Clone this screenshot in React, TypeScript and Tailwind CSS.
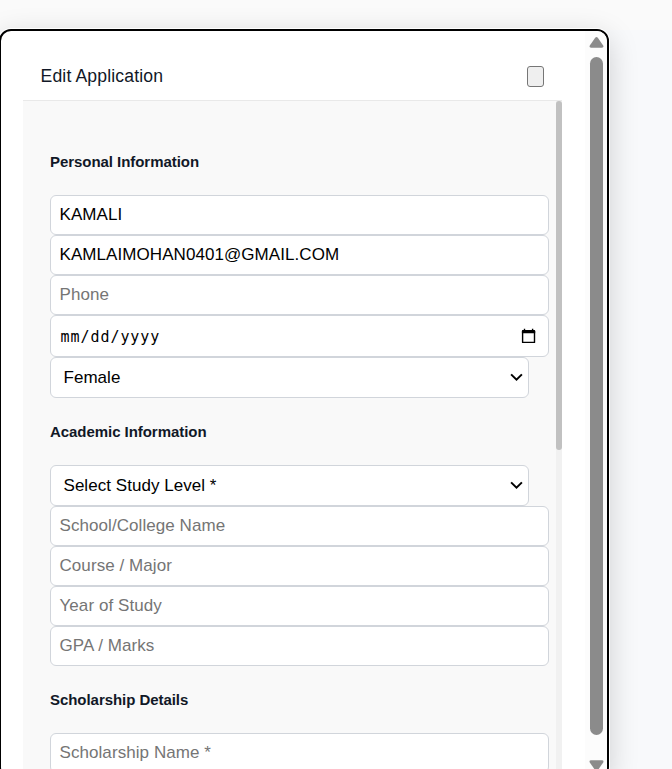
import type { ReactNode } from 'react';

function Field({ value, placeholder }: { value?: string; placeholder?: string }) {
  return (
    <div className="flex h-10 w-[499px] items-center rounded-[6px] border border-[#d1d5db] bg-white pl-[8.5px] text-[17px] tracking-[0.07px] text-black">
      {value ? <span>{value}</span> : <span className="text-[#757575]">{placeholder}</span>}
    </div>
  );
}

function Select({ children }: { children: ReactNode }) {
  return (
    <div className="flex h-[41px] w-[479px] items-center justify-between rounded-[6px] border border-[#d1d5db] bg-white pr-[5px] pl-[12.5px] text-[17px] tracking-[0.04px] text-black">
      <span>{children}</span>
      <svg width="13" height="9" viewBox="0 0 13 9" fill="none" stroke="#000" strokeWidth="2">
        <path d="M1.1 1.4 L6.5 6.6 L11.9 1.4" />
      </svg>
    </div>
  );
}

function DateField() {
  return (
    <div className="flex h-[42px] w-[499px] items-center justify-between rounded-[6px] border border-[#d1d5db] bg-white pr-[12px] pl-[9.5px] text-black">
      <span className="pt-[2px] font-['DejaVu_Sans_Mono',monospace] text-[15px] tracking-[0.95px]">mm/dd/yyyy</span>
      <svg width="15" height="16" viewBox="0 0 15 16" fill="none">
        <path d="M1.6 3.2h11.9v11.2h-11.9z" stroke="#000" strokeWidth="1.4" strokeLinejoin="round" />
        <path d="M1.8 2h11.5q.9 0 .9 .9V5.2H.9V2.9q0-.9 .9-.9zM2.8 .7h1.4V3H2.8zM10.9 .7h1.4V3h-1.4z" fill="#000" />
      </svg>
    </div>
  );
}

function Section({ title, children }: { title: string; children: ReactNode }) {
  return (
    <section className="flex flex-col">
      <h3 className="flex h-[67px] items-center pt-[2px] text-[15px] font-bold tracking-[-0.05px] text-[#111827]">{title}</h3>
      {children}
    </section>
  );
}

export default function App() {
  return (
    <div className="h-[769px] w-[672px] overflow-hidden bg-[linear-gradient(#fafafa_30px,#f8f9fb_30px)] pt-[29px] font-['Liberation_Sans',Arial,sans-serif]">
      <div className="-ml-px flex h-[750px] w-[610px] overflow-hidden rounded-[12px] border-2 border-black bg-white shadow-[0_0_0_1px_#ffffff,0_8px_30px_rgba(0,0,0,0.18)]">
        <div className="flex w-[584px] shrink-0 flex-col pl-[22px]">
          <header className="flex h-[70px] w-[539px] shrink-0 items-center justify-between border-b border-[#e9e9e9] pt-[21px] pr-[18px] pl-[17.5px]">
            <h2 className="text-[17.6px] tracking-[0.15px] text-[#111827]">Edit Application</h2>
            <button className="h-[21px] w-[17px] rounded-[3px] border border-[#767676] bg-[#efefef]" aria-label="Close" />
          </header>
          <div className="flex h-[680px] w-[539px] shrink-0 justify-between bg-[#f9f9f9]">
            <div className="flex flex-col pt-[27px] pl-[27px]">
              <Section title="Personal Information">
                <Field value="KAMALI" />
                <Field value="KAMLAIMOHAN0401@GMAIL.COM" />
                <Field placeholder="Phone" />
                <DateField />
                <Select>Female</Select>
              </Section>
              <Section title="Academic Information">
                <Select>Select Study Level *</Select>
                <Field placeholder="School/College Name" />
                <Field placeholder="Course / Major" />
                <Field placeholder="Year of Study" />
                <Field placeholder="GPA / Marks" />
              </Section>
              <Section title="Scholarship Details">
                <Field placeholder="Scholarship Name *" />
              </Section>
            </div>
            <div className="w-[6px] bg-[#f1f1f1]">
              <div className="h-[349px] rounded-[3px] bg-[#c1c1c1]" />
            </div>
          </div>
        </div>
        <div className="flex w-[22px] shrink-0 flex-col items-center bg-[#fcfcfc] pt-[6px]">
          <svg width="15" height="11" viewBox="0 0 15 11" className="shrink-0" fill="#8b8b8b">
            <path d="M6.2 .7Q7.5-.5 8.8 .7L14.2 8.5Q15.1 10.5 13 10.7H2Q-.1 10.5 .8 8.5Z" />
          </svg>
          <div className="mt-[9px] h-[678px] w-[13px] shrink-0 rounded-full bg-[#8b8b8b]" />
          <svg width="15" height="11" viewBox="0 0 15 11" className="mt-[25px] shrink-0" fill="#8b8b8b">
            <path d="M6.2 10.3Q7.5 11.5 8.8 10.3L14.2 2.5Q15.1 .5 13 .3H2Q-.1 .5 .8 2.5Z" />
          </svg>
        </div>
      </div>
    </div>
  );
}
